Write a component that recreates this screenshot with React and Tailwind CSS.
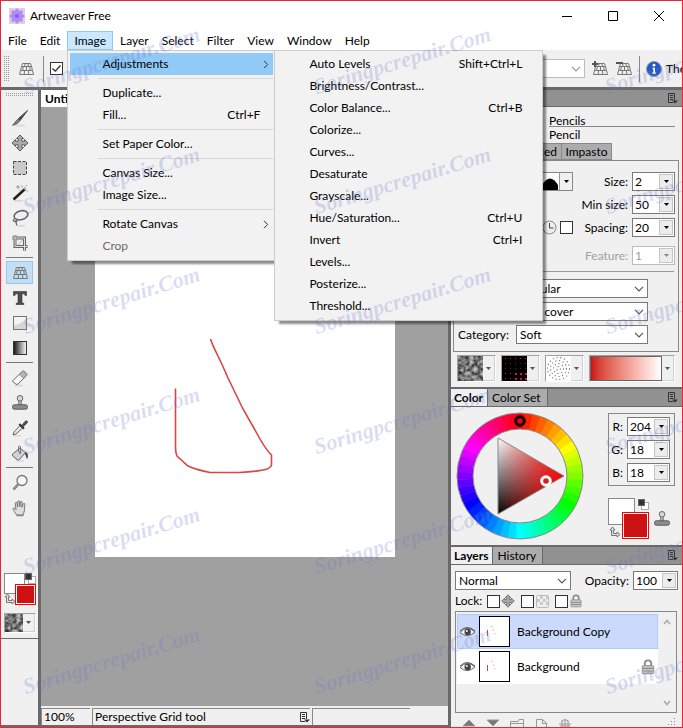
import React from 'react';

const MENU_ITEMS = ['Layer', 'Select', 'Filter', 'View', 'Window', 'Help'];

const IMAGE_MENU = [
  { label: 'Adjustments', submenu: true, active: true },
  null,
  { label: 'Duplicate...' },
  { label: 'Fill...', shortcut: 'Ctrl+F' },
  null,
  { label: 'Set Paper Color...' },
  null,
  { label: 'Canvas Size...' },
  { label: 'Image Size...' },
  null,
  { label: 'Rotate Canvas', submenu: true },
  { label: 'Crop', disabled: true },
];

const ADJUSTMENTS_MENU = [
  { label: 'Auto Levels', shortcut: 'Shift+Ctrl+L' },
  { label: 'Brightness/Contrast...' },
  { label: 'Color Balance...', shortcut: 'Ctrl+B' },
  { label: 'Colorize...' },
  { label: 'Curves...' },
  { label: 'Desaturate' },
  { label: 'Grayscale...' },
  { label: 'Hue/Saturation...', shortcut: 'Ctrl+U' },
  { label: 'Invert', shortcut: 'Ctrl+I' },
  { label: 'Levels...' },
  { label: 'Posterize...' },
  { label: 'Threshold...' },
];

/* ---------- Icons ---------- */

function Svg({ size = 18, children, className = '' }) {
  return (
    <svg width={size} height={size} viewBox="0 0 18 18" fill="none" className={`shrink-0 ${className}`} aria-hidden="true">
      {children}
    </svg>
  );
}

function GridShape() {
  return (
    <path
      d="M5.5 3.5h8M4.5 6.5h10M3.5 10.5h12M2.5 14.5h14M5.5 3.5L4.5 6.5L3.5 10.5L2.5 14.5M13.5 3.5L14.5 6.5L15.5 10.5L16.5 14.5M8 3.5L7.7 6.5M11 3.5L11.3 6.5M6.3 6.5L5.7 10.5M9.5 6.5V10.5M12.7 6.5L13.3 10.5M7.5 10.5L7.2 14.5M11.5 10.5L11.8 14.5"
      stroke="#777"
    />
  );
}

function GridIcon() {
  return (
    <Svg>
      <GridShape />
    </Svg>
  );
}

function GridEditIcon({ add }) {
  return (
    <Svg>
      <GridShape />
      <path d={add ? 'M1 4h6M4 1v6' : 'M1 3h7'} stroke="#555" strokeWidth="2" />
    </Svg>
  );
}

function BrushIcon() {
  return (
    <Svg>
      <path d="M4 16.5h10" stroke="#ddd" strokeWidth="2" />
      <path d="M16.5 1.5L7.5 9.5L9.3 11.3z" fill="#555" stroke="#444" />
      <path d="M7.3 10L9 11.7C7.5 14 5 15.5 1.5 16.3C4 14.5 4.5 11.5 7.3 10z" fill="#888" stroke="#333" strokeWidth=".7" />
    </Svg>
  );
}

function MoveIcon({ size = 18 }) {
  return (
    <Svg size={size}>
      <path
        d="M9 1L12.5 4.5H10.8V7.2H13.5V5.5L17 9L13.5 12.5V10.8H10.8V13.5H12.5L9 17L5.5 13.5H7.2V10.8H4.5V12.5L1 9L4.5 5.5V7.2H7.2V4.5H5.5z"
        fill="#aaa"
        stroke="#5c5c5c"
      />
    </Svg>
  );
}

function SelectionIcon() {
  return (
    <Svg>
      <rect x="2.5" y="2.5" width="13" height="13" fill="#c9c9c9" stroke="#444" strokeDasharray="3 1.5" />
    </Svg>
  );
}

function WandIcon() {
  return (
    <Svg>
      <path d="M4 16.8h8" stroke="#d5d5d5" strokeWidth="1.5" />
      <path d="M2.5 15.5L14 5" stroke="#222" strokeWidth="2.6" />
      <path d="M12.7 5.2L14.5 3.5" stroke="#aaa" strokeWidth="2" />
      <path d="M7 1v4M5 3h4M11 1.5v2M16 1l-1 1.2M15.5 6.5l1.3 1M8.5 6.5l1-1" stroke="#999" />
    </Svg>
  );
}

function LassoIcon() {
  return (
    <Svg>
      <path d="M7 16.8h7" stroke="#d5d5d5" strokeWidth="1.5" />
      <ellipse cx="10" cy="6.3" rx="7" ry="4.4" transform="rotate(-15 10 6.3)" stroke="#666" strokeWidth="1.6" />
      <path d="M4 9.5C1.5 10.5 2 13 4.5 12.2M5 10.5C7 12 5.5 13 4.8 12.5L5.8 16.5" stroke="#666" strokeWidth="1.3" />
    </Svg>
  );
}

function CropIcon() {
  return (
    <Svg>
      <path d="M4 1.5V12.5H16.5M1.5 4H13.5V16.5" stroke="#666" strokeWidth="3" />
      <path d="M4 2V12.5H16M2 4H13.5V16" stroke="#ddd" />
      <path d="M6 12L12 5.5" stroke="#999" strokeWidth=".7" />
    </Svg>
  );
}

function RectIcon() {
  return (
    <Svg>
      <rect x="2.5" y="2.5" width="13" height="13" fill="#f4f4f4" stroke="#777" />
      <path d="M3 11C8 11 13 8 15 3.5V15H3z" fill="#d5d5d5" />
    </Svg>
  );
}

function GradientIcon() {
  return (
    <Svg>
      <defs>
        <linearGradient id="toolGradient">
          <stop stopColor="#111" />
          <stop offset="1" stopColor="#fff" />
        </linearGradient>
      </defs>
      <rect x="2.5" y="2.5" width="13" height="13" fill="url(#toolGradient)" stroke="#333" />
    </Svg>
  );
}

function TypeIcon() {
  return (
    <Svg>
      <path d="M2.5 2.5H15.5V6.5H14C14 5 13 4.7 11 4.7V13.7L13 14.5V15.5H5V14.5L7 13.7V4.7C5 4.7 4 5 4 6.5H2.5z" fill="#4d4d4d" stroke="#333" strokeWidth=".6" />
    </Svg>
  );
}

function EraserIcon() {
  return (
    <Svg>
      <path d="M4 16.5h8" stroke="#d5d5d5" strokeWidth="1.5" />
      <path d="M2 11.5L11 2.5Q12.5 1.5 13.5 2.5L15.5 4.5Q16.5 5.5 15.5 6.7L7 15Q6 16 4.8 15L2.2 13Q1.3 12.2 2 11.5z" fill="#f7f7f7" stroke="#666" />
      <path d="M8.3 5.5L11.2 2.8Q12.4 2 13.3 2.8L15.2 4.8Q16 5.7 15.2 6.5L12.4 9.3z" fill="#b5b5b5" stroke="#888" strokeWidth=".7" />
    </Svg>
  );
}

function StampIcon() {
  return (
    <Svg>
      <circle cx="9" cy="4.3" r="2.8" fill="#d8d8d8" stroke="#666" />
      <path d="M7.8 7L7.3 11H10.7L10.2 7" fill="#aaa" stroke="#777" strokeWidth=".8" />
      <rect x="1.5" y="10.8" width="15" height="4.4" rx="1.8" fill="#8c8c8c" stroke="#5c5c5c" />
    </Svg>
  );
}

function DropperIcon() {
  return (
    <Svg>
      <path d="M3 16.8h7" stroke="#d5d5d5" strokeWidth="1.2" />
      <path d="M9 6.5L11.5 9L5 15L2 16L3 13z" fill="#e8e8e8" stroke="#666" />
      <path d="M8.3 5L13 9.7" stroke="#333" strokeWidth="2" />
      <path d="M11 6.5L14 2.5Q15.5 1.3 16.2 2.3Q17 3.2 15.6 4.5L12 7.7z" fill="#555" stroke="#444" />
    </Svg>
  );
}

function BucketIcon() {
  return (
    <Svg>
      <path d="M5 17h8" stroke="#d5d5d5" strokeWidth="1.2" />
      <path d="M14 8C17 8.5 17.5 11 16.5 15C14.8 14 15.5 11 13 9z" fill="#445" />
      <path d="M1.5 10L9 4L14.5 8.5L8.5 15.5Q7.3 16.5 6 15.5L1.8 12Q1 11 1.5 10z" fill="#d2d2d2" stroke="#666" />
      <path d="M7.5 8V3Q8 1 9.5 2.5V8.5" stroke="#777" />
      <circle cx="9" cy="8.8" r="1" fill="#666" />
    </Svg>
  );
}

function ZoomIcon() {
  return (
    <Svg>
      <circle cx="11" cy="6.5" r="5" fill="#f7f7f7" stroke="#777" strokeWidth="1.3" />
      <path d="M7 10.5L2.5 15.5" stroke="#666" strokeWidth="2.6" />
      <path d="M7 10.5L2.5 15.5" stroke="#bbb" />
    </Svg>
  );
}

function HandIcon() {
  return (
    <Svg>
      <path
        d="M5.7 16C4 13.5 2.5 11.5 2 10.2C1.6 9 3 8.3 4 9.5L5 10.8L4.3 4.5C4.2 3 5.8 3 6 4.3L6.7 8V2.7C6.8 1.4 8.4 1.4 8.5 2.7L8.8 7.8L9.4 2.9C9.6 1.8 11 1.9 11 3.1L11 8.2L12.2 4.8C12.6 3.7 14 4.2 13.8 5.4C13.3 9.5 14 12 12 16z"
        fill="#dedede"
        stroke="#777"
      />
      <path d="M5.5 16.5h7" stroke="#888" strokeWidth="1.5" />
    </Svg>
  );
}

function LockIcon({ size = 16 }) {
  return (
    <Svg size={size}>
      <path d="M5.5 8V4.5Q5.5 1.5 9 1.5T12.5 4.5V8" stroke="#888" strokeWidth="2" />
      <rect x="2.5" y="7.5" width="13" height="9" rx="1" fill="#ccc" stroke="#888" />
      <path d="M3 10.5h12M3 13.5h12" stroke="#8a8a8a" strokeWidth="1.3" />
      <path d="M9 8v8" stroke="#aaa" />
    </Svg>
  );
}

function EyeIcon() {
  return (
    <svg width="17" height="12" viewBox="0 0 17 12" fill="none" className="shrink-0" aria-hidden="true">
      <path d="M1 6.5Q8 -1.5 16 6Q8.5 13 1 6.5z" fill="#f5f5f5" stroke="#666" />
      <path d="M1 5Q8 -2 16 5" stroke="#555" />
      <circle cx="8.7" cy="6" r="3.2" fill="#444" />
      <circle cx="7.8" cy="5" r="1" fill="#fff" />
    </svg>
  );
}

function PanelMenuIcon() {
  return (
    <svg width="11" height="11" viewBox="0 0 11 11" fill="none" className="shrink-0" aria-hidden="true">
      <path d="M6 9.5H1.5V.5H7.5V7M3 2.5h3M3 4.5h3M3 6.5h3" stroke="#333" />
      <path d="M5 7.5h6L8 10.5z" fill="#333" />
    </svg>
  );
}

function ChevronDown({ color = '#555' }) {
  return (
    <svg width="10" height="6" viewBox="0 0 10 6" fill="none" className="pointer-events-none absolute right-1 top-1/2 -translate-y-1/2" aria-hidden="true">
      <path d="M1 .8L5 4.8L9 .8" stroke={color} strokeWidth="1.2" />
    </svg>
  );
}

function Caret({ color = '#000' }) {
  return (
    <svg width="5" height="3" viewBox="0 0 5 3" aria-hidden="true">
      <path d="M0 0h5L2.5 3z" fill={color} />
    </svg>
  );
}

function DefaultColorsIcon() {
  return (
    <svg width="11" height="11" viewBox="0 0 11 11" aria-hidden="true">
      <rect x="3.5" y="3.5" width="7" height="7" fill="#fff" stroke="#aaa" />
      <rect x=".5" y=".5" width="6" height="6" fill="#333" stroke="#666" />
    </svg>
  );
}

function SwapIcon() {
  return (
    <svg width="12" height="12" viewBox="0 0 12 12" fill="none" aria-hidden="true">
      <path d="M3.5 1L6 4H4.5V7.5H8V6L11 8.5L8 11V9.5H2.5V4H1z" fill="#ddd" stroke="#777" />
    </svg>
  );
}

/* Dotted drag handle */
function Gripper({ id, width, height, className }) {
  return (
    <svg width={width} height={height} className={`shrink-0 ${className}`} aria-hidden="true">
      <pattern id={id} width="2" height="2" patternUnits="userSpaceOnUse">
        <rect width="1" height="1" fill="#999" />
      </pattern>
      <rect width={width} height={height} fill={`url(#${id})`} />
    </svg>
  );
}

/* Grainy paper swatch */
function Texture({ id, size }) {
  return (
    <svg width={size} height={size} aria-hidden="true" className="shrink-0">
      <filter id={id} x="0" y="0" width="1" height="1" colorInterpolationFilters="sRGB">
        <feTurbulence type="fractalNoise" baseFrequency="0.25" numOctaves="3" seed="4" />
        <feColorMatrix values="1 0 0 0 -.03  1 0 0 0 -.03  1 0 0 0 -.03  0 0 0 0 1" />
      </filter>
      <rect width={size} height={size} filter={`url(#${id})`} />
    </svg>
  );
}

/* ---------- Controls ---------- */

function SpinField({ label, value, disabled, className = 'w-[43px]' }) {
  return (
    <label className={`flex items-center gap-1 ${disabled ? 'text-[#a0a0a0]' : ''}`}>
      <span className="whitespace-nowrap">{label}</span>
      <span className={`flex h-[19px] shrink-0 border bg-white p-px ${disabled ? 'border-[#bbb]' : 'border-[#7a7a7a]'} ${className}`}>
        <input type="text" defaultValue={value} disabled={disabled} className="w-0 min-w-0 flex-1 bg-transparent pl-px leading-4 outline-none" />
        <button type="button" disabled={disabled} aria-label={`${label} list`} className="flex w-[14px] items-center justify-center border border-[#c5c5c5] bg-[#ececec]">
          <Caret color={disabled ? '#888' : '#000'} />
        </button>
      </span>
    </label>
  );
}

function Combo({ label, value, className = '' }) {
  return (
    <span className={`relative block ${className}`}>
      <select aria-label={label} defaultValue={value} className="block h-[19px] w-full appearance-none border border-[#7a7a7a] bg-white pl-[3px] leading-4">
        <option>{value}</option>
      </select>
      <ChevronDown />
    </span>
  );
}

function Check({ label, checked }) {
  return (
    <span className="relative block h-[13px] w-[13px] shrink-0">
      <input type="checkbox" aria-label={label} defaultChecked={checked} className="peer block h-[13px] w-[13px] appearance-none border border-[#333] bg-white" />
      <svg viewBox="0 0 13 13" fill="none" className="pointer-events-none absolute inset-0 hidden peer-checked:block" aria-hidden="true">
        <path d="M2.5 6.5L5.2 9.2L10.5 3.5" stroke="#222" strokeWidth="1.2" />
      </svg>
    </span>
  );
}

function SwatchPicker({ label, children, className = '' }) {
  return (
    <button type="button" aria-label={label} className={`flex border border-[#a0a0a0] border-r-white border-b-white ${className}`}>
      {children}
      <span className="flex w-[12px] items-center justify-center self-stretch border-r border-b border-[#d0d0d0] bg-[#f0f0f0]">
        <Caret color="#555" />
      </span>
    </button>
  );
}

function PanelTabs({ tabs }) {
  return (
    <div className="flex h-[18px] shrink-0 items-stretch border-b border-[#696969] bg-[#919191]">
      {tabs.map((tab, i) => (
        <button
          key={tab}
          type="button"
          className={`border-r border-[#696969] leading-4 ${i === 0 ? 'bg-[#f0f0f0] pl-[3px] pr-1 font-bold' : 'bg-[#acacac] pl-1 pr-[6px]'}`}
        >
          {tab}
        </button>
      ))}
      <button type="button" aria-label="Panel menu" className="ml-auto mr-1 self-center">
        <PanelMenuIcon />
      </button>
    </div>
  );
}

/* ---------- Menus ---------- */

function MenuList({ items, shortcutPad = 'pr-[13px]', className = '', children }) {
  return (
    <div role="menu" className={`absolute z-20 border border-[#ccc] bg-[#f2f2f2] pl-[2px] pr-px pt-[2px] pb-[3px] shadow-[4px_4px_2px_-1px_rgba(0,0,0,0.45)] ${className}`}>
      {items.map((item, i) =>
        item === null ? (
          <div key={i} className="ml-7 flex h-[7px] items-center">
            <div className="h-px w-full bg-[#d7d7d7]" />
          </div>
        ) : (
          <button
            key={item.label}
            type="button"
            role="menuitem"
            disabled={item.disabled}
            className={`flex h-[22px] w-full items-center justify-between whitespace-nowrap pl-8 ${item.active ? 'bg-[#91c9f7]' : ''} ${item.disabled ? 'text-[#6d6d6d]' : ''}`}
          >
            <span>{item.label}</span>
            {item.shortcut && <span className={shortcutPad}>{item.shortcut}</span>}
            {item.submenu && (
              <svg width="6" height="9" viewBox="0 0 6 9" fill="none" className="mr-1" aria-hidden="true">
                <path d="M1 .8L4.6 4.5L1 8.2" stroke="#333" />
              </svg>
            )}
          </button>
        )
      )}
      {children}
    </div>
  );
}

function MenuBar() {
  return (
    <nav className="flex h-[19px] shrink-0 items-stretch">
      <button type="button" className="pl-[7px] pr-[6px]">File</button>
      <button type="button" className="px-[7px]">Edit</button>
      <div className="relative flex">
        <button type="button" className="border border-[#90c8f6] bg-[#cce8ff] px-[6px]">Image</button>
        <MenuList items={IMAGE_MENU} className="left-0 top-full w-[208px]">
          <MenuList items={ADJUSTMENTS_MENU} shortcutPad="pr-[19px]" className="-top-px left-full w-[269px]" />
        </MenuList>
      </div>
      {MENU_ITEMS.map((item) => (
        <button key={item} type="button" className="pl-[7px] pr-[6px]">{item}</button>
      ))}
    </nav>
  );
}

function TitleBar() {
  return (
    <header className="flex h-[30px] shrink-0 items-center pl-2">
      <svg width="16" height="16" viewBox="0 0 16 16" aria-hidden="true">
        <rect width="16" height="16" fill="#d8d4e2" />
        {[0, 45, 90, 135, 180, 225, 270, 315].map((a) => (
          <ellipse key={a} cx="8" cy="4" rx="2" ry="3.5" fill="#b08af5" transform={`rotate(${a} 8 8)`} />
        ))}
        <circle cx="8" cy="8" r="2" fill="#8d5ff0" />
      </svg>
      <h1 className="ml-[5px]">Artweaver Free</h1>
      <div className="ml-auto flex">
        {[
          ['Minimize', 'M0 5.5h10'],
          ['Maximize', 'M.5 .5h9v9h-9z'],
          ['Close', 'M0 0L10 10M10 0L0 10'],
        ].map(([name, d]) => (
          <button key={name} type="button" aria-label={name} className="flex h-[28px] w-[46px] items-center justify-center">
            <svg width="10" height="10" viewBox="0 0 10 10" fill="none" aria-hidden="true">
              <path d={d} stroke="#000" />
            </svg>
          </button>
        ))}
      </div>
    </header>
  );
}

function OptionsBar() {
  return (
    <div className="flex h-[37px] shrink-0 items-center overflow-hidden bg-[#f0f0f0]">
      <Gripper id="gripTop" width={5} height={25} className="ml-[3px]" />
      <button type="button" aria-label="Perspective Grid" className="ml-2"><GridIcon /></button>
      <div className="ml-2 mr-[6px] h-[26px] w-px bg-[#888]" />
      <Check label="Show grid" checked />
      <div className="ml-auto flex items-center">
        <span className="relative block w-[120px]">
          <select aria-label="Grid preset" disabled className="block h-[19px] w-full appearance-none border border-[#bbb] bg-white" />
          <ChevronDown color="#999" />
        </span>
        <button type="button" aria-label="Add preset" className="ml-[6px]"><GridEditIcon add /></button>
        <button type="button" aria-label="Remove preset" className="ml-[6px]"><GridEditIcon /></button>
        <div className="mx-[6px] h-[26px] w-px bg-[#888]" />
        <svg width="16" height="16" viewBox="0 0 16 16" className="shrink-0" aria-hidden="true">
          <circle cx="8" cy="8" r="7.5" fill="#2458c8" stroke="#999" />
          <circle cx="8" cy="4.2" r="1.4" fill="#fff" />
          <path d="M6.3 6.7H9V11.5H10V12.7H6.3V11.5H7.3V7.8H6.3z" fill="#fff" />
        </svg>
        <span className="ml-1 w-4 whitespace-nowrap">The</span>
      </div>
    </div>
  );
}

/* ---------- Tool palette ---------- */

const TOOL_GROUPS = [
  [['Brush', BrushIcon], ['Move', MoveIcon], ['Selection', SelectionIcon], ['Magic Wand', WandIcon], ['Lasso', LassoIcon], ['Crop', CropIcon]],
  [['Perspective Grid', GridIcon], ['Text', TypeIcon], ['Shape', RectIcon], ['Gradient', GradientIcon]],
  [['Eraser', EraserIcon], ['Stamp', StampIcon], ['Eyedropper', DropperIcon], ['Fill', BucketIcon]],
  [['Zoom', ZoomIcon], ['Hand', HandIcon]],
];

function ToolPalette() {
  return (
    <aside className="flex w-[40px] shrink-0 flex-col border-r-[3px] border-b-2 border-[#696969] bg-[#f0f0f0]">
      <Gripper id="gripTools" width={27} height={4} className="mx-auto mt-[3px]" />
      <div className="mt-2 flex flex-col items-center">
        {TOOL_GROUPS.map((group, g) => (
          <React.Fragment key={g}>
            {g > 0 && <div className="my-[2px] h-px w-[27px] bg-[#777]" />}
            {group.map(([name, Icon]) => (
              <button
                key={name}
                type="button"
                aria-label={name}
                className={`my-px flex h-[23px] w-[27px] items-center justify-center border ${name === 'Perspective Grid' ? 'border-[#90c8f6] bg-[#c3def5]' : 'border-transparent'}`}
              >
                <Icon />
              </button>
            ))}
          </React.Fragment>
        ))}
      </div>
      <div className="border-b border-[#696969] pt-[53px] pb-[5px] pl-[3px]">
        <div className="relative h-8 w-8">
          <button type="button" aria-label="Secondary color" className="absolute left-0 top-0 h-[21px] w-[21px] border border-[#888] bg-white" />
          <span className="absolute right-0 top-0"><DefaultColorsIcon /></span>
          <span className="absolute bottom-0 left-0"><SwapIcon /></span>
          <button type="button" aria-label="Primary color" className="absolute bottom-0 right-0 h-[21px] w-[21px] border border-[#f00] bg-[#cc1212] outline-1 -outline-offset-2 outline-white" />
        </div>
        <SwatchPicker label="Paper texture" className="mt-2 w-8">
          <Texture id="paperSmall" size={18} />
        </SwatchPicker>
      </div>
    </aside>
  );
}

/* ---------- Document ---------- */

function DocumentArea() {
  return (
    <main className="flex min-w-0 flex-1 flex-col border-b-2 border-[#696969] bg-[#a0a0a0]">
      <div className="flex h-[17px] shrink-0 bg-[#919191]">
        <button type="button" className="bg-white px-1 font-bold leading-4">Untitled-1</button>
      </div>
      <div className="flex min-h-0 flex-1 items-center justify-center">
        <svg width="300" height="300" viewBox="0 0 300 300" fill="none" className="bg-white" role="img" aria-label="Canvas">
          <path
            d="M80.5 131.5V188Q80.5 196 82 199L93 209Q102 213 115 215.5H144Q164 214.5 172 212Q177 210 176.5 207V198Q170 192 160 173L148 152L133 121Q128 109 122 97Q117 87 115.5 82"
            stroke="#de4444"
            strokeWidth="1.6"
          />
        </svg>
      </div>
      <footer className="flex h-[19px] shrink-0 gap-[2px] bg-[#f0f0f0] pt-[2px] leading-4">
        <span className="w-[49px] border-t border-l border-[#888] pl-[2px]">100%</span>
        <span className="flex w-[218px] items-center justify-between border-t border-l border-[#888] pl-[2px]">
          Perspective Grid tool
          <PanelMenuIcon />
        </span>
        <span className="w-[98px] border-t border-l border-[#888]" />
      </footer>
    </main>
  );
}

/* ---------- Brush panel ---------- */

function BrushPanel() {
  return (
    <section className="h-[299px] shrink-0 border-b-2 border-[#696969]">
      <div className="flex h-[17px] items-center justify-end border-b border-[#696969] bg-[#919191] pr-1">
        <button type="button" aria-label="Panel menu"><PanelMenuIcon /></button>
      </div>
      <div className="ml-[98px] mr-[7px] pt-[6px]">
        <p className="h-[14px] border-b border-[#888] leading-4">Pencils</p>
        <p className="h-4 leading-4">Pencil</p>
      </div>
      <div className="ml-[2px] flex h-[17px] w-[159px] justify-end">
        <button type="button" className="border border-[#888] bg-[#acacac] px-1 leading-4">Advanced</button>
        <button type="button" className="-ml-px w-[51px] border border-[#888] bg-[#acacac] leading-4">Impasto</button>
      </div>
      <div className="ml-[2px] mr-[3px] h-[192px] border border-[#888] pt-[11px]">
        <div className="flex flex-col gap-1 pr-[3px]">
          <div className="flex items-center justify-between pl-[80px]">
            <button type="button" aria-label="Brush shape" className="flex h-[19px] w-[39px] border border-[#888] bg-white">
              <svg width="24" height="17" viewBox="0 0 24 17" aria-hidden="true">
                <path d="M7 17V12Q15 -1 23 12V17z" fill="#000" />
              </svg>
              <span className="flex flex-1 items-center justify-center self-stretch border-l border-[#999] bg-[#f0f0f0]"><Caret /></span>
            </button>
            <SpinField label="Size:" value="2" />
          </div>
          <div className="flex justify-end">
            <SpinField label="Min size:" value="50" />
          </div>
          <div className="flex items-center pl-[88px]">
            <svg width="15" height="15" viewBox="0 0 15 15" fill="none" aria-hidden="true">
              <circle cx="7.5" cy="7.5" r="6.5" fill="#eee" stroke="#888" />
              <path d="M7.5 3v5h4" stroke="#444" />
            </svg>
            <span className="ml-[3px]"><Check label="Use spacing" /></span>
            <div className="ml-auto"><SpinField label="Spacing:" value="20" /></div>
          </div>
          <div className="mt-[5px] flex justify-end">
            <SpinField label="Feature:" value="1" disabled />
          </div>
        </div>
        <div className="ml-1 mr-[4px] mt-[6px] h-px bg-[#999]" />
        <div className="mt-[7px] flex flex-col gap-1 pl-[62px] pr-[30px]">
          <Combo label="Dab type" value="Circular" />
          <Combo label="Method" value="Soft cover" />
        </div>
        <div className="mt-1 flex items-center justify-between pl-1 pr-[30px]">
          <span>Category:</span>
          <Combo label="Category" value="Soft" className="w-[132px]" />
        </div>
      </div>
      <div className="mt-[3px] flex gap-[5px] pl-[6px] pr-[7px]">
        <SwatchPicker label="Paper"><Texture id="paperLarge" size={25} /></SwatchPicker>
        <SwatchPicker label="Pattern">
          <svg width="25" height="25" aria-hidden="true">
            <rect width="25" height="25" fill="#000" />
            {[3, 8, 13, 18, 23].map((x) =>
              [2, 7, 12, 17, 22].map((y) => (
                <rect key={`${x}-${y}`} x={x} y={y} width={y > 14 && x > 9 ? 2 : 1} height={y > 14 && x > 9 ? 2 : 1} fill={y > 14 || y < 4 ? '#c22' : '#722'} />
              ))
            )}
          </svg>
        </SwatchPicker>
        <SwatchPicker label="Nozzle">
          <svg width="25" height="25" aria-hidden="true">
            <rect width="25" height="25" fill="#fff" />
            {[2, 5, 8, 11].map((r) => (
              <circle key={r} cx="12.5" cy="12.5" r={r} fill="none" stroke="#777" strokeWidth="1.1" strokeDasharray="1.2 2.6" />
            ))}
          </svg>
        </SwatchPicker>
        <SwatchPicker label="Gradient" className="flex-1">
          <span className="flex-1 self-stretch border border-[#666] bg-linear-to-r from-[#cc1212] to-white" />
        </SwatchPicker>
      </div>
    </section>
  );
}

/* ---------- Color panel ---------- */

function ColorWheel() {
  const steps = 48;
  const point = (r, deg) => {
    const a = ((deg - 90) * Math.PI) / 180;
    return `${64 + r * Math.cos(a)} ${64 + r * Math.sin(a)}`;
  };
  return (
    <svg width="128" height="128" viewBox="0 0 128 128" className="shrink-0" role="img" aria-label="Color wheel">
      <defs>
        <linearGradient id="shade" x1="0" y1="0" x2="0" y2="1">
          <stop stopColor="#fff" />
          <stop offset="1" stopColor="#000" />
        </linearGradient>
        <linearGradient id="hue">
          <stop stopColor="#f00" stopOpacity="0" />
          <stop offset="1" stopColor="#f00" />
        </linearGradient>
      </defs>
      {Array.from({ length: steps }, (_, i) => {
        const from = ((i - 0.5) * 360) / steps;
        const to = from + 360 / steps + 0.5;
        return (
          <path
            key={i}
            d={`M${point(63, from)}A63 63 0 0 1 ${point(63, to)}L${point(47, to)}A47 47 0 0 0 ${point(47, from)}z`}
            fill={`hsl(${(i * 360) / steps} 100% 50%)`}
          />
        );
      })}
      <circle cx="64" cy="64" r="63" fill="none" stroke="#888" />
      <circle cx="64" cy="64" r="47" fill="none" stroke="#888" />
      <path d="M42 26L108 64L42 102z" fill="url(#shade)" />
      <path d="M42 26L108 64L42 102z" fill="url(#hue)" stroke="#888" />
      <circle cx="64" cy="9" r="4.3" fill="none" stroke="#000" strokeWidth="3" />
      <circle cx="90" cy="69" r="4.3" fill="none" stroke="#fff" strokeWidth="3" />
    </svg>
  );
}

function ColorPanel() {
  return (
    <section className="h-[158px] shrink-0 border-b-2 border-[#696969]">
      <PanelTabs tabs={['Color', 'Color Set']} />
      <div className="flex justify-between pl-[5px] pr-[7px] pt-[5px]">
        <ColorWheel />
        <div className="w-[67px]">
          <div className="mt-px flex flex-col items-end gap-1 border border-[#888] py-[3px] pr-[4px]">
            <SpinField label="R:" value="204" />
            <SpinField label="G:" value="18" />
            <SpinField label="B:" value="18" />
          </div>
          <div className="mt-3 flex items-center justify-between">
            <div className="relative h-[41px] w-[41px]">
              <button type="button" aria-label="Secondary color" className="absolute left-0 top-0 h-[27px] w-[27px] border border-[#888] bg-white" />
              <span className="absolute right-0 top-px"><DefaultColorsIcon /></span>
              <span className="absolute bottom-px left-px"><SwapIcon /></span>
              <button type="button" aria-label="Primary color" className="absolute bottom-0 right-0 h-[27px] w-[27px] border border-[#f00] bg-[#cc1212] outline-1 -outline-offset-2 outline-white" />
            </div>
            <button type="button" aria-label="Clone color" className="mr-1"><StampIcon /></button>
          </div>
        </div>
      </div>
    </section>
  );
}

/* ---------- Layers panel ---------- */

function LayerRow({ name, selected, locked }) {
  return (
    <li className={`flex h-[35px] items-center border pl-px ${selected ? 'border-[#b0ccf5] bg-[#cbdafa]' : 'border-white bg-white'}`}>
      <button type="button" aria-label={`Toggle ${name}`}><EyeIcon /></button>
      <svg width="31" height="31" viewBox="0 0 31 31" fill="none" className="ml-[3px] shrink-0" aria-hidden="true">
        <rect x=".5" y=".5" width="30" height="30" fill="#fff" stroke="#000" />
        <path d="M8.5 14v6" stroke="#c44" />
        <path d="M12.5 10l5 11" stroke="#e77" strokeDasharray="1 3" />
      </svg>
      <span className="ml-[7px]">{name}</span>
      {locked && <span className="ml-auto mr-px"><LockIcon /></span>}
    </li>
  );
}

function LayersPanel() {
  return (
    <section className="flex min-h-0 flex-1 flex-col overflow-hidden">
      <PanelTabs tabs={['Layers', 'History']} />
      <div className="flex items-center justify-between pl-1 pr-[4px] pt-[6px]">
        <Combo label="Blend mode" value="Normal" className="w-[116px]" />
        <SpinField label="Opacity:" value="100" className="w-[45px]" />
      </div>
      <div className="mt-[3px] flex h-5 items-center pl-1">
        <span className="w-8">Lock:</span>
        <Check label="Lock position" />
        <span className="w-[21px] pl-px"><MoveIcon size={14} /></span>
        <Check label="Lock transparency" />
        <span className="w-[21px] pl-[2px]">
          <svg width="13" height="13" viewBox="0 0 13 13" aria-hidden="true">
            <rect x=".5" y=".5" width="12" height="12" rx="1" fill="#eee" stroke="#bbb" />
            <path d="M1 4h3v3H1zM7 4h3v3H7zM4 7h3v3H4zM4 1h3v3H4zM10 7h2v3h-2zM10 1h2v3h-2z" fill="#ccc" />
          </svg>
        </span>
        <Check label="Lock all" />
        <span className="pl-px"><LockIcon size={14} /></span>
      </div>
      <div className="ml-1 mr-[5px] mt-[2px] flex h-[102px] shrink-0 border border-[#888] p-px pt-[2px]">
        <ul className="flex-1">
          <LayerRow name="Background Copy" selected />
          <LayerRow name="Background" locked />
        </ul>
        <div className="flex w-[17px] flex-col items-center justify-between py-[5px]">
          <svg width="8" height="6" viewBox="0 0 8 6" fill="none" aria-hidden="true"><path d="M1 5L4 1.5L7 5" stroke="#aaa" strokeWidth="1.6" /></svg>
          <svg width="8" height="6" viewBox="0 0 8 6" fill="none" aria-hidden="true"><path d="M1 1L4 4.5L7 1" stroke="#aaa" strokeWidth="1.6" /></svg>
        </div>
      </div>
      <div className="mt-[5px] flex shrink-0 gap-2 pl-[10px]">
        {[
          ['Move up', 'M2 8L8 2L14 8z', '#777'],
          ['Move down', 'M2 2H14L8 8z', '#777'],
          ['New group', 'M1.5 12V3.5H9L10 1.5H14.5V12M2 5.5h12', 'none'],
          ['New layer', 'M3.5 12V1.5H9.5L13.5 5V12M9.5 2V5.5H13', 'none'],
          ['Delete layer', 'M2 6H14M3 8H13M8 1V12M5 3V12M11 3V12M4 3.5Q8 0 12 3.5', 'none'],
        ].map(([name, d, fill]) => (
          <button key={name} type="button" aria-label={name}>
            <svg width="16" height="12" viewBox="0 0 16 12" aria-hidden="true">
              <path d={d} fill={fill} stroke="#999" />
            </svg>
          </button>
        ))}
        <svg width="8" height="8" viewBox="0 0 8 8" className="ml-auto mr-[6px]" aria-hidden="true">
          <path d="M6 0h1v1H6zM3 3h1v1H3zM6 3h1v1H6zM0 6h1v1H0zM3 6h1v1H3zM6 6h1v1H6z" fill="#888" />
        </svg>
      </div>
    </section>
  );
}

/* Repeated slanted site mark laid over the whole window */
function Watermark() {
  return (
    <div aria-hidden="true" className="pointer-events-none absolute inset-0 z-30 -mt-[22px] grid auto-rows-[120px] grid-cols-[repeat(3,291px)] overflow-hidden pl-[26px] select-none">
      {Array.from({ length: 18 }, (_, i) => (
        <span key={i} className="flex origin-bottom-left -rotate-17 items-end whitespace-nowrap font-['Liberation_Serif',serif] text-[22px] font-bold italic leading-6 text-[#6a78c8]/25">
          Soringpcrepair.Com
        </span>
      ))}
    </div>
  );
}

export default function App() {
  return (
    <div className="relative flex h-screen min-h-[728px] flex-col overflow-hidden border border-[#e8253a] bg-white font-['Lato','Open_Sans',sans-serif] text-[12px] leading-4 text-black">
      <TitleBar />
      <MenuBar />
      <OptionsBar />
      <div className="flex min-h-0 flex-1 border-t-[3px] border-[#696969]">
        <ToolPalette />
        <DocumentArea />
        <aside className="flex w-[234px] shrink-0 flex-col border-l-[3px] border-[#696969] bg-[#f0f0f0]">
          <BrushPanel />
          <ColorPanel />
          <LayersPanel />
        </aside>
      </div>
      <Watermark />
    </div>
  );
}
